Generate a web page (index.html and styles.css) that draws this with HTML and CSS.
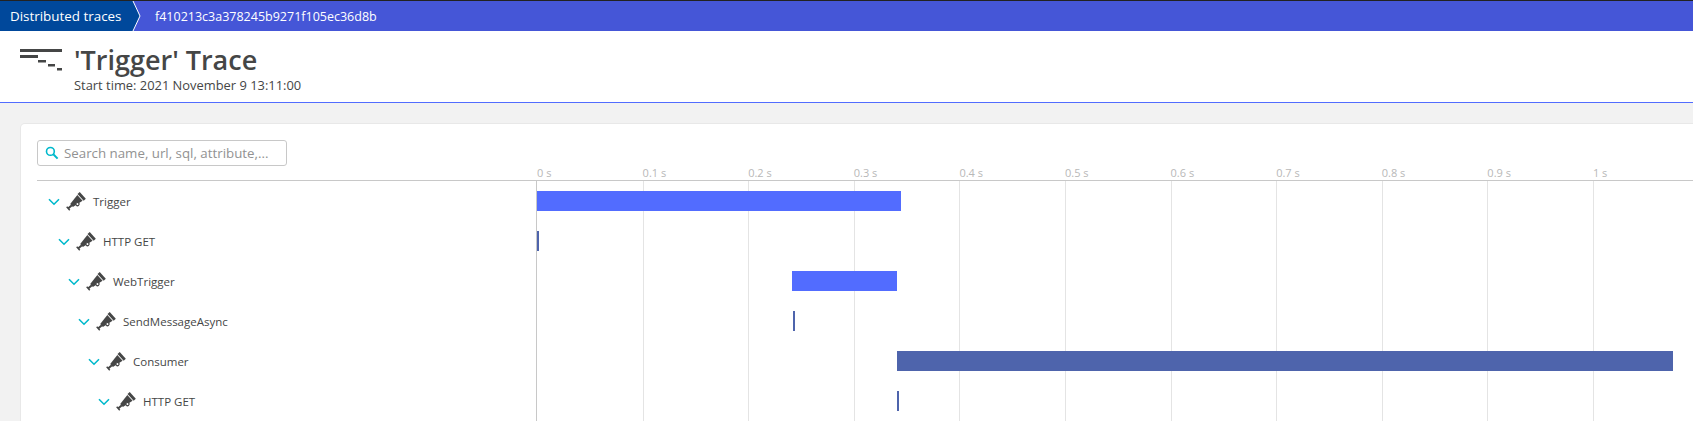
FILE: index.html
```html
<!DOCTYPE html>
<html lang="en">
<head>
<meta charset="utf-8">
<title>'Trigger' Trace</title>
<link rel="stylesheet" href="styles.css">
</head>
<body>
<svg class="defs" width="0" height="0" aria-hidden="true">
  <symbol id="probe" viewBox="0 0 20 21">
    <g fill="#454646" transform="rotate(-42 10 10.5)">
      <rect x="-0.6" y="9.5" width="5" height="2"/>
      <rect x="-1.2" y="8.2" width="1.5" height="4.6"/>
      <path d="M4 8.5 L15.3 6.6 V14.4 L4 12.5 Z"/>
      <rect x="16.2" y="5.9" width="2.9" height="9.2"/>
      <circle cx="9.4" cy="13.4" r="1.6" fill="#fff" stroke="#454646" stroke-width="1.2"/>
    </g>
  </symbol>
  <symbol id="chev" viewBox="0 0 12 8">
    <path d="M1 1.2 L6 6.2 L11 1.2" fill="none" stroke="#00b9cc" stroke-width="1.6"/>
  </symbol>
</svg>

<nav class="nav">
  <a class="crumb">Distributed traces</a>
  <svg class="crumb-arrow" width="12" height="30" viewBox="0 0 12 30"><path d="M0 0 H3 L10 15 L3 30 H0 Z" fill="#00489b"/><path d="M3 0 L10 15 L3 30" fill="none" stroke="#fff" stroke-width="1"/></svg>
  <span class="crumb-current">f410213c3a378245b9271f105ec36d8b</span>
</nav>

<header class="head">
  <svg class="head-icon" width="44" height="24" viewBox="0 0 44 24">
    <g fill="#454646">
      <rect x="0" y="0" width="42" height="3"/>
      <rect x="0" y="6" width="18" height="3"/>
      <rect x="18" y="11" width="8" height="2.5"/>
      <rect x="28" y="15" width="7" height="2.5"/>
      <rect x="37" y="19" width="5" height="2.5"/>
    </g>
  </svg>
  <div class="head-text">
    <h1 class="title">'Trigger' Trace</h1>
    <p class="subtitle">Start time: 2021 November 9 13:11:00</p>
  </div>
</header>

<main class="main">
  <section class="card">
    <div class="search">
      <svg class="search-icon" width="14" height="14" viewBox="0 0 14 14"><circle cx="5.4" cy="5.4" r="3.9" fill="none" stroke="#00b9cc" stroke-width="1.6"/><path d="M8.3 8.3 L12.6 12.6" stroke="#00b9cc" stroke-width="2"/></svg>
      <span class="search-text">Search name, url, sql, attribute,...</span>
    </div>
    <div class="axis">
      <div class="axis-spacer"></div>
      <div class="ticks">
        <span class="tick">0 s</span><span class="tick">0.1 s</span><span class="tick">0.2 s</span><span class="tick">0.3 s</span><span class="tick">0.4 s</span><span class="tick">0.5 s</span><span class="tick">0.6 s</span><span class="tick">0.7 s</span><span class="tick">0.8 s</span><span class="tick">0.9 s</span><span class="tick">1 s</span>
      </div>
    </div>
    <div class="rows">
      <div class="gridlines"></div>
      <div class="row">
        <div class="label" style="padding-left:11px"><svg class="chev"><use href="#chev"/></svg><svg class="probe"><use href="#probe"/></svg><span>Trigger</span></div>
        <div class="track"><div class="bar bar-light" style="margin-left:1px;width:364px"></div></div>
      </div>
      <div class="row">
        <div class="label" style="padding-left:21px"><svg class="chev"><use href="#chev"/></svg><svg class="probe"><use href="#probe"/></svg><span>HTTP GET</span></div>
        <div class="track"><div class="bar bar-dark" style="margin-left:1px;width:2px"></div></div>
      </div>
      <div class="row">
        <div class="label" style="padding-left:31px"><svg class="chev"><use href="#chev"/></svg><svg class="probe"><use href="#probe"/></svg><span>WebTrigger</span></div>
        <div class="track"><div class="bar bar-light" style="margin-left:256px;width:105px"></div></div>
      </div>
      <div class="row">
        <div class="label" style="padding-left:41px"><svg class="chev"><use href="#chev"/></svg><svg class="probe"><use href="#probe"/></svg><span>SendMessageAsync</span></div>
        <div class="track"><div class="bar bar-dark" style="margin-left:257px;width:2px"></div></div>
      </div>
      <div class="row">
        <div class="label" style="padding-left:51px"><svg class="chev"><use href="#chev"/></svg><svg class="probe"><use href="#probe"/></svg><span>Consumer</span></div>
        <div class="track"><div class="bar bar-dark" style="margin-left:361px;width:776px"></div></div>
      </div>
      <div class="row">
        <div class="label" style="padding-left:61px"><svg class="chev"><use href="#chev"/></svg><svg class="probe"><use href="#probe"/></svg><span>HTTP GET</span></div>
        <div class="track"><div class="bar bar-dark" style="margin-left:361px;width:2px"></div></div>
      </div>
    </div>
  </section>
</main>
</body>
</html>
```
FILE: styles.css
```css
* { box-sizing: border-box; }
html, body { margin: 0; height: 421px; overflow: hidden; }
body { background: #f2f2f2; color: #454646; font-family: "Open Sans", "Noto Sans", sans-serif; }
.defs { position: absolute; }

.nav { display: flex; align-items: stretch; height: 31px; border-top: 1px solid #222; background: #4556d7; color: #fff; font-size: 13.4px; }
.crumb { display: flex; align-items: center; padding-left: 10px; width: 130px; background: #00489b; white-space: nowrap; }
.crumb-arrow { flex: none; }
.crumb-current { display: flex; align-items: center; margin-left: 13px; font-size: 12.5px; }

.head { display: flex; height: 72px; background: #fff; border-bottom: 1px solid #526cff; padding: 18px 0 0 20px; }
.head-icon { flex: none; }
.head-text { margin-left: 10px; margin-top: -7px; }
.title { margin: 0; font-size: 27px; line-height: 36px; font-weight: 600; }
.subtitle { margin: -2px 0 0; font-size: 12.9px; line-height: 18px; }

.main { height: 318px; padding: 21px 0 0 21px; }
.card { height: 297px; background: #fff; border-radius: 4px 0 0 0; padding: 16px 0 0 16px; box-shadow: 0 0 0 1px #e8e8e8; overflow: hidden; }

.search { display: flex; align-items: center; width: 250px; height: 26px; border: 1px solid #c8c8c8; border-radius: 3px; padding-left: 7px; }
.search-icon { flex: none; }
.search-text { margin-left: 5px; font-size: 13.3px; color: #929292; }

.axis { display: flex; height: 16px; margin-top: -1px; border-bottom: 1px solid #c8c8c8; }
.axis-spacer { width: 500px; flex: none; }
.ticks { display: flex; min-width: 0; overflow: hidden; }
.tick { width: 105.6px; flex: none; font-size: 11px; line-height: 15px; color: #b8b8b8; }

.rows { position: relative; }
.gridlines { position: absolute; top: 0; bottom: 0; left: 499px; right: 0; border-left: 1px solid #c8c8c8; background: repeating-linear-gradient(to right, transparent 0, transparent 104.6px, #e4e4e4 104.6px, #e4e4e4 105.6px); background-position: 1px 0; }

.row { position: relative; display: flex; height: 40px; align-items: center; }
.label { display: flex; align-items: center; width: 499px; flex: none; font-size: 11.5px; }
.chev { width: 12px; height: 8px; flex: none; margin-top: 2px; }
.probe { width: 20px; height: 21px; flex: none; margin-left: 6px; }
.label span { margin-left: 7px; }
.track { flex: 1; }
.bar { height: 20px; }
.bar-light { background: #526cff; }
.bar-dark { background: #4e64ac; }
```
